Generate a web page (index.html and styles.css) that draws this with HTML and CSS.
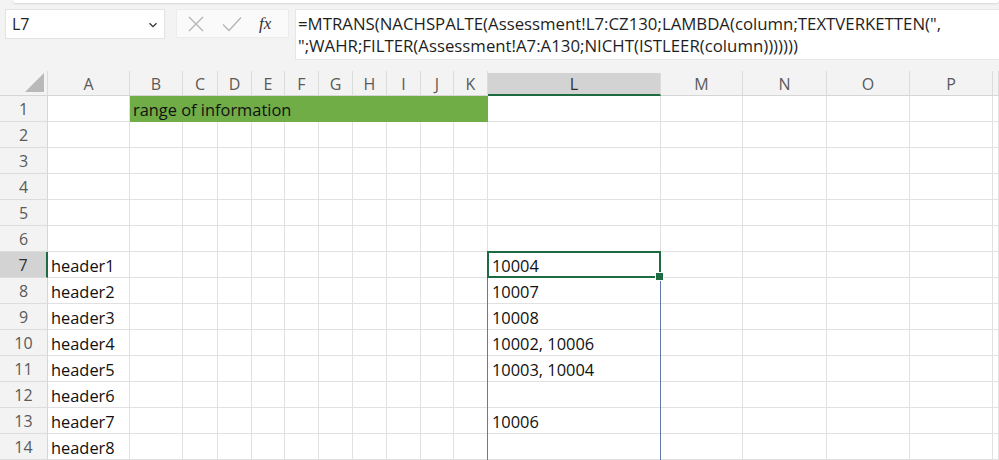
FILE: index.html
```html
<!DOCTYPE html>
<html>
<head>
<meta charset="utf-8">
<link rel="stylesheet" href="styles.css">
</head>
<body>
<div class="app">
  <div class="ribbon-edge"></div>
  <div class="fbar">
    <div class="namebox">
      <span class="ref">L7</span>
      <svg class="chev" width="10" height="6" viewBox="0 0 10 6"><path d="M1.5 1.2 L5 4.6 L8.5 1.2" fill="none" stroke="#333" stroke-width="1.3"/></svg>
    </div>
    <div class="btns">
      <svg class="ic" width="18" height="18" viewBox="0 0 18 18"><path d="M2 2 L16 16 M16 2 L2 16" stroke="#b4b4b4" stroke-width="1.3" fill="none"/></svg>
      <svg class="ic" width="22" height="18" viewBox="0 0 22 18"><path d="M2 9.5 L8 15.5 L20 2.5" stroke="#b4b4b4" stroke-width="1.3" fill="none"/></svg>
      <span class="fx">fx</span>
    </div>
    <div class="formula">
      <span class="fl">=MTRANS(NACHSPALTE(Assessment!L7:CZ130;LAMBDA(column;TEXTVERKETTEN(",</span>
      <span class="fl">";WAHR;FILTER(Assessment!A7:A130;NICHT(ISTLEER(column)))))))</span>
    </div>
  </div>
  <div class="sheet">
    <div class="corner"><span class="tri"></span></div>
    <div class="ch">A</div><div class="ch">B</div><div class="ch">C</div><div class="ch">D</div><div class="ch">E</div><div class="ch">F</div><div class="ch">G</div><div class="ch">H</div><div class="ch">I</div><div class="ch">J</div><div class="ch">K</div><div class="ch sel">L</div><div class="ch">M</div><div class="ch">N</div><div class="ch">O</div><div class="ch">P</div><div class="ch"></div>

    <div class="rh">1</div><div class="c"></div><div class="c green span10">range of information</div><div class="c"></div><div class="c"></div><div class="c"></div><div class="c"></div><div class="c"></div><div class="c"></div>
    <div class="rh">2</div><div class="c"></div><div class="c"></div><div class="c"></div><div class="c"></div><div class="c"></div><div class="c"></div><div class="c"></div><div class="c"></div><div class="c"></div><div class="c"></div><div class="c"></div><div class="c"></div><div class="c"></div><div class="c"></div><div class="c"></div><div class="c"></div><div class="c"></div>
    <div class="rh">3</div><div class="c"></div><div class="c"></div><div class="c"></div><div class="c"></div><div class="c"></div><div class="c"></div><div class="c"></div><div class="c"></div><div class="c"></div><div class="c"></div><div class="c"></div><div class="c"></div><div class="c"></div><div class="c"></div><div class="c"></div><div class="c"></div><div class="c"></div>
    <div class="rh">4</div><div class="c"></div><div class="c"></div><div class="c"></div><div class="c"></div><div class="c"></div><div class="c"></div><div class="c"></div><div class="c"></div><div class="c"></div><div class="c"></div><div class="c"></div><div class="c"></div><div class="c"></div><div class="c"></div><div class="c"></div><div class="c"></div><div class="c"></div>
    <div class="rh">5</div><div class="c"></div><div class="c"></div><div class="c"></div><div class="c"></div><div class="c"></div><div class="c"></div><div class="c"></div><div class="c"></div><div class="c"></div><div class="c"></div><div class="c"></div><div class="c"></div><div class="c"></div><div class="c"></div><div class="c"></div><div class="c"></div><div class="c"></div>
    <div class="rh">6</div><div class="c"></div><div class="c"></div><div class="c"></div><div class="c"></div><div class="c"></div><div class="c"></div><div class="c"></div><div class="c"></div><div class="c"></div><div class="c"></div><div class="c"></div><div class="c"></div><div class="c"></div><div class="c"></div><div class="c"></div><div class="c"></div><div class="c"></div>
    <div class="rh sel">7</div><div class="c">header1</div><div class="c"></div><div class="c"></div><div class="c"></div><div class="c"></div><div class="c"></div><div class="c"></div><div class="c"></div><div class="c"></div><div class="c"></div><div class="c"></div><div class="c lcol">10004<span class="active"></span><span class="spillbox"></span></div><div class="c"></div><div class="c"></div><div class="c"></div><div class="c"></div><div class="c"></div>
    <div class="rh">8</div><div class="c">header2</div><div class="c"></div><div class="c"></div><div class="c"></div><div class="c"></div><div class="c"></div><div class="c"></div><div class="c"></div><div class="c"></div><div class="c"></div><div class="c"></div><div class="c lcol">10007</div><div class="c"></div><div class="c"></div><div class="c"></div><div class="c"></div><div class="c"></div>
    <div class="rh">9</div><div class="c">header3</div><div class="c"></div><div class="c"></div><div class="c"></div><div class="c"></div><div class="c"></div><div class="c"></div><div class="c"></div><div class="c"></div><div class="c"></div><div class="c"></div><div class="c lcol">10008</div><div class="c"></div><div class="c"></div><div class="c"></div><div class="c"></div><div class="c"></div>
    <div class="rh">10</div><div class="c">header4</div><div class="c"></div><div class="c"></div><div class="c"></div><div class="c"></div><div class="c"></div><div class="c"></div><div class="c"></div><div class="c"></div><div class="c"></div><div class="c"></div><div class="c lcol">10002, 10006</div><div class="c"></div><div class="c"></div><div class="c"></div><div class="c"></div><div class="c"></div>
    <div class="rh">11</div><div class="c">header5</div><div class="c"></div><div class="c"></div><div class="c"></div><div class="c"></div><div class="c"></div><div class="c"></div><div class="c"></div><div class="c"></div><div class="c"></div><div class="c"></div><div class="c lcol">10003, 10004</div><div class="c"></div><div class="c"></div><div class="c"></div><div class="c"></div><div class="c"></div>
    <div class="rh">12</div><div class="c">header6</div><div class="c"></div><div class="c"></div><div class="c"></div><div class="c"></div><div class="c"></div><div class="c"></div><div class="c"></div><div class="c"></div><div class="c"></div><div class="c"></div><div class="c lcol"></div><div class="c"></div><div class="c"></div><div class="c"></div><div class="c"></div><div class="c"></div>
    <div class="rh">13</div><div class="c">header7</div><div class="c"></div><div class="c"></div><div class="c"></div><div class="c"></div><div class="c"></div><div class="c"></div><div class="c"></div><div class="c"></div><div class="c"></div><div class="c"></div><div class="c lcol">10006</div><div class="c"></div><div class="c"></div><div class="c"></div><div class="c"></div><div class="c"></div>
    <div class="rh">14</div><div class="c">header8</div><div class="c"></div><div class="c"></div><div class="c"></div><div class="c"></div><div class="c"></div><div class="c"></div><div class="c"></div><div class="c"></div><div class="c"></div><div class="c"></div><div class="c lcol"></div><div class="c"></div><div class="c"></div><div class="c"></div><div class="c"></div><div class="c"></div>
  </div>
</div>
</body>
</html>
```

FILE: styles.css
```css
* { box-sizing: border-box; }
html, body { margin: 0; padding: 0; }
body {
  width: 999px;
  height: 460px;
  overflow: hidden;
  background: #f3f3f3;
  font-family: "Open Sans", "Noto Sans", sans-serif;
  color: #1a1a1a;
}
.app { position: relative; width: 999px; height: 460px; overflow: hidden; }
.ribbon-edge {
  height: 3px;
  margin: 0 0 0 13px;
  background: #fff;
  border-radius: 0 0 6px 6px;
  box-shadow: 0 1px 2px rgba(0,0,0,0.12);
}
.fbar {
  display: flex;
  align-items: flex-start;
  padding: 6px 0 0 5px;
  height: 68px;
}
.namebox {
  width: 160px;
  height: 30px;
  background: #fff;
  border: 1px solid #e3e3e3;
  display: flex;
  align-items: center;
  justify-content: space-between;
  padding: 0 6px 0 6px;
}
.ref { font-size: 16px; color: #222; }
.chev { margin-top: 1px; }
.btns {
  margin-left: 11px;
  width: 113px;
  height: 29px;
  background: #fafafa;
  border: 1px solid #ececec;
  display: flex;
  align-items: center;
  padding-left: 10px;
}
.btns .ic:first-child { margin-right: 16px; }
.btns .ic:nth-child(2) { margin-right: 16px; }
.fx {
  font-family: "Liberation Serif", "DejaVu Serif", serif;
  font-style: italic;
  font-size: 17px;
  color: #333;
}
.formula {
  margin-left: 6px;
  flex: 1;
  height: 51px;
  background: #fff;
  border: 1px solid #e6e6e6;
  border-right: none;
  padding: 3px 0 0 2px;
  font-size: 16.8px;
  line-height: 21.5px;
  color: #1e1e1e;
}
.fl { display: block; white-space: nowrap; }

.sheet {
  display: grid;
  grid-template-columns: 48px 82px 53px 35px 34px 33px 34px 34px 34px 34px 33px 34px 173px 82px 84px 83px 83px 1fr;
  grid-template-rows: 25px repeat(14, 26px);
  font-size: 16.4px;
}
.corner {
  position: relative;
  border-bottom: 1px solid #d6d6d6;
  border-right: 1px solid #dcdcdc;
}
.tri {
  position: absolute;
  right: 3px;
  bottom: 3px;
  width: 0; height: 0;
  border-left: 19px solid transparent;
  border-bottom: 19px solid #b9b9b9;
}
.ch {
  display: flex;
  align-items: center;
  justify-content: center;
  color: #5a5a5a;
  font-size: 16px;
  border-right: 1px solid #dcdcdc;
  border-bottom: 1px solid #d6d6d6;
  padding-top: 1px;
}
.ch.sel {
  background: #d3d3d3;
  color: #2f2f2f;
  border-bottom: 2px solid #1e6b41;
  margin-top: 2px;
}
.rh {
  display: flex;
  align-items: center;
  justify-content: center;
  color: #5a5a5a;
  font-size: 16px;
  border-bottom: 1px solid #dcdcdc;
  border-right: 1px solid #d6d6d6;
}
.rh.sel {
  background: #d3d3d3;
  color: #2f2f2f;
  border-right: 2px solid #1e6b41;
}
.c {
  position: relative;
  background: #fff;
  border-right: 1px solid #e1e1e1;
  border-bottom: 1px solid #e1e1e1;
  display: flex;
  align-items: center;
  padding: 2px 0 0 3px;
  white-space: nowrap;
  color: #111;
}
.green {
  grid-column: span 10;
  background: #70ad47;
  border-right: none;
  border-bottom-color: #70ad47;
}
.lcol { padding-left: 4px; }
.active {
  position: absolute;
  left: -1px;
  top: -1px;
  right: -1px;
  bottom: -1px;
  border: 2px solid #1e6b41;
  z-index: 3;
}
.active::after {
  content: "";
  position: absolute;
  right: -5px;
  bottom: -5px;
  width: 7px;
  height: 7px;
  background: #1e6b41;
  border: 1px solid #fff;
}
.spillbox {
  position: absolute;
  left: -1px;
  top: -1px;
  width: 174px;
  height: 220px;
  border: 1px solid #6279ad;
  z-index: 2;
}
```
